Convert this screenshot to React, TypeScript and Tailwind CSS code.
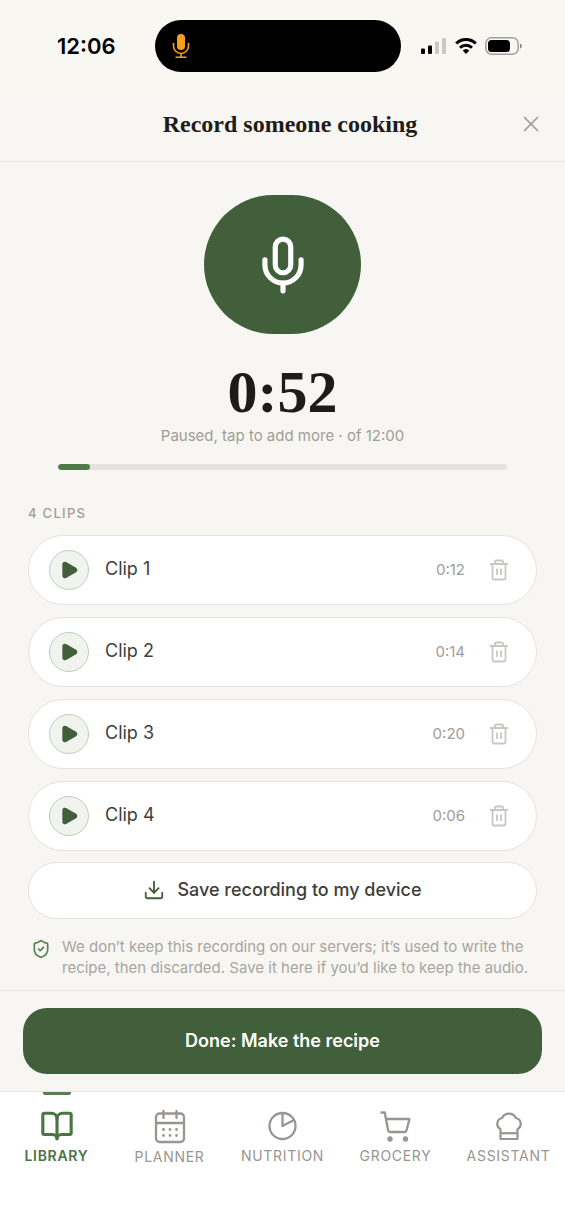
import { BookOpen, Download, Mic, Play, ShieldCheck, X } from 'lucide-react'
import type { ReactNode } from 'react'
import { clsx } from 'clsx'

interface Clip {
  name: string
  length: string
}

interface NavItem {
  label: string
  icon: ReactNode
  active?: boolean
}

const CLIPS: Clip[] = [
  { name: 'Clip 1', length: '0:12' },
  { name: 'Clip 2', length: '0:14' },
  { name: 'Clip 3', length: '0:20' },
  { name: 'Clip 4', length: '0:06' },
]

const RECORDED_SECONDS = 52
const MAX_SECONDS = 720

const NAV_ITEMS: NavItem[] = [
  { label: 'Library', icon: <BookOpen size={34} strokeWidth={2.2} />, active: true },
  { label: 'Planner', icon: <PlannerIcon /> },
  { label: 'Nutrition', icon: <NutritionIcon /> },
  { label: 'Grocery', icon: <GroceryIcon /> },
  { label: 'Assistant', icon: <ChefIcon /> },
]

function PlannerIcon() {
  return (
    <svg width="34" height="35" viewBox="0 0 34 35" fill="none" stroke="currentColor" strokeWidth="2.3" strokeLinecap="round" aria-hidden="true">
      <rect x="3" y="4.5" width="28" height="28.5" rx="3.5" />
      <path d="M3 14h28M10.5 2v7M23.5 2v7" />
      <path d="M10.5 20.5h.01M17 20.5h.01M23.5 20.5h.01M10.5 26.5h.01M17 26.5h.01M23.5 26.5h.01" strokeWidth="2.8" />
    </svg>
  )
}

function NutritionIcon() {
  return (
    <svg width="34" height="34" viewBox="0 0 34 34" fill="none" stroke="currentColor" strokeWidth="2.3" strokeLinejoin="round" aria-hidden="true">
      <circle cx="16.5" cy="17" r="13" />
      <path d="M16.5 4v13l11.5-6" />
    </svg>
  )
}

function GroceryIcon() {
  return (
    <svg width="34" height="34" viewBox="0 0 34 34" fill="none" stroke="currentColor" strokeWidth="2.3" strokeLinejoin="round" aria-hidden="true">
      <path d="M1.5 3.5h4.2l3.4 17.7a2.3 2.3 0 0 0 2.3 1.8h13.8a2.3 2.3 0 0 0 2.3-1.8L30.5 10H7" />
      <circle cx="11" cy="30" r="2.7" fill="currentColor" stroke="none" />
      <circle cx="26.5" cy="30" r="2.7" fill="currentColor" stroke="none" />
    </svg>
  )
}

function ChefIcon() {
  return (
    <svg width="34" height="34" viewBox="0 0 34 34" fill="none" stroke="currentColor" strokeWidth="2.2" strokeLinejoin="round" aria-hidden="true">
      <path d="M8.5 30V20.200a6 6 0 0 1 1.600-11.200 7.600 7.600 0 0 1 13.800 0 6 6 0 0 1 1.600 11.200V30z" />
      <path d="M8.5 24.200h17" />
    </svg>
  )
}

function TrashIcon() {
  return (
    <svg width="22" height="22" viewBox="0 0 22 22" fill="none" stroke="currentColor" strokeWidth="1.8" strokeLinejoin="round" aria-hidden="true">
      <path d="M2 5h18M7 5V3a1.500 1.500 0 0 1 1.500-1.500h5A1.500 1.500 0 0 1 15 3v2" />
      <path d="M4.500 5v14A1.500 1.500 0 0 0 6 20.500h10a1.500 1.500 0 0 0 1.500-1.500V5" />
      <path d="M9 9.500v6.500M13 9.500v6.500" />
    </svg>
  )
}

function StatusBar() {
  return (
    <div className="flex h-[88px] items-start bg-[#f8f7f2] pt-5 pr-2">
      <div className="flex h-[52px] flex-1 items-center justify-center pl-[18px] text-[22px] font-semibold text-black">12:06</div>
      <div className="flex h-[52px] w-[246px] items-center rounded-full bg-black pl-[17px]">
        <svg width="18" height="26" viewBox="0 0 18 26" fill="none" stroke="#f9a01b" strokeWidth="1.6" aria-hidden="true">
          <rect x="5" y="1" width="8" height="16" rx="4" fill="#f9a01b" stroke="none" />
          <path d="M1.500 10v3a7.500 7.500 0 0 0 15 0v-3M9 20.500V24M3.500 24.300h11" />
        </svg>
      </div>
      <div className="flex h-[52px] flex-1 items-center gap-2 pl-5">
        <svg width="26" height="18" viewBox="0 0 26 18" aria-hidden="true">
          <rect x="0" y="11.500" width="4" height="5.500" rx="1" />
          <rect x="7" y="8.500" width="4" height="8.500" rx="1" />
          <rect x="14" y="4.500" width="4" height="12.500" rx="1" fill="#c9c8c4" />
          <rect x="21" y="1" width="4" height="16" rx="1" fill="#c9c8c4" />
        </svg>
        <svg width="22" height="18" viewBox="0 0 22 18" fill="none" stroke="black" strokeWidth="3" aria-hidden="true">
          <path d="M1.200 6.500a14 14 0 0 1 19.600 0M5 10.700a8.600 8.600 0 0 1 12 0" />
          <path d="M11 17l-3.300-3.500a4.800 4.800 0 0 1 6.600 0z" fill="black" stroke="none" />
        </svg>
        <svg width="38" height="18" viewBox="0 0 38 18" aria-hidden="true">
          <rect x="0.800" y="0.800" width="32.400" height="16.400" rx="5.500" fill="none" stroke="#a2a19d" strokeWidth="1.5" />
          <rect x="3" y="3" width="22" height="12" rx="3.500" />
          <path d="M35 6.500q2 .8 2 2.500t-2 2.500z" fill="#8b8a87" />
        </svg>
      </div>
    </div>
  )
}

function ClipRow({ name, length }: Clip) {
  return (
    <li className="flex h-[70px] items-center rounded-full border border-[#e4e3e0] bg-white pr-[26px] pl-5">
      <button
        type="button"
        aria-label={`Play ${name}`}
        className="flex size-10 items-center justify-center rounded-full border border-[#bdd0b8] bg-[#f0f3ee] text-[#425f3b]"
      >
        <Play size={20} fill="currentColor" />
      </button>
      <span className="ml-4 flex-1 pb-0.5 text-lg text-[#403e3b]">{name}</span>
      <span className="text-[15px] text-[#a09d99]">{length}</span>
      <button type="button" aria-label={`Delete ${name}`} className="ml-[23px] text-[#c9c7c4]">
        <TrashIcon />
      </button>
    </li>
  )
}

export default function App() {
  return (
    <div className="flex min-h-screen flex-col bg-[#f7f6f2] font-['Inter',sans-serif]">
      <StatusBar />

      <header className="relative flex h-[74px] items-center justify-center border-b border-[#e8e7e4] pb-0.5 pl-[15px]">
        <h1 className="font-['Liberation_Serif',serif] text-2xl font-bold text-[#1e1c19]">Record someone cooking</h1>
        <button type="button" aria-label="Close" className="absolute right-[21px] text-[#a09d99]">
          <X size={26} strokeWidth={1.6} />
        </button>
      </header>

      <main className="px-7 pt-[33px] pb-3">
        {/* Recorder */}
        <section className="flex flex-col items-center">
          <button
            type="button"
            aria-label="Resume recording"
            className="flex h-[139px] w-[157px] items-center justify-center rounded-full bg-[#425f3b] text-white"
          >
            <Mic size={62} />
          </button>
          <p className="mt-7 font-['Liberation_Serif',serif] text-6xl leading-[60px] font-bold text-[#1e1c19]">0:52</p>
          <p className="mt-0.5 text-[15px] leading-6 text-[#a09d99]">Paused, tap to add more · of 12:00</p>
          <div className="mt-4 h-1.5 self-stretch px-[30px]">
            <div className="h-full overflow-hidden rounded-sm bg-[#e5e4e1]">
              <div
                className="h-full rounded-sm bg-[#4f7a48]"
                style={{ width: `${(RECORDED_SECONDS / MAX_SECONDS) * 100}%` }}
              />
            </div>
          </div>
        </section>

        {/* Clips */}
        <h2 className="mt-[33px] text-[13px] leading-5 font-medium tracking-widest text-[#a09d99] uppercase">{CLIPS.length} clips</h2>
        <ul className="mt-3 flex flex-col gap-3">
          {CLIPS.map((clip) => (
            <ClipRow key={clip.name} {...clip} />
          ))}
        </ul>

        <button
          type="button"
          className="mt-[11px] flex h-[57px] w-full items-center justify-center gap-3 rounded-full border border-[#e4e3e0] bg-white pb-0.5 text-lg font-medium text-[#403e3b]"
        >
          <Download size={22} className="text-[#425f3b]" />
          Save recording to my device
        </button>

        <div className="mt-[17px] flex gap-[11px] pl-[3px]">
          <ShieldCheck size={20} className="mt-[3px] shrink-0 text-[#55804e]" />
          <p className="text-[15px] leading-[21px] text-[#a8a5a1]">
            We don’t keep this recording on our servers; it’s used to write the recipe, then discarded. Save it here if you’d like to keep the audio.
          </p>
        </div>
      </main>

      <div className="border-t border-[#e8e7e4] px-[23px] py-[17px]">
        <button type="button" className="h-[66px] w-full rounded-3xl bg-[#425f3b] text-lg font-semibold text-white">
          Done: Make the recipe
        </button>
      </div>

      <nav className="grid flex-1 grid-cols-5 border-t border-[#e8e7e4] bg-white">
        {NAV_ITEMS.map((item) => (
          <a
            key={item.label}
            href="#"
            aria-current={item.active ? 'page' : undefined}
            className={clsx(
              'relative flex flex-col items-center pt-[17px] text-sm leading-5 tracking-wider uppercase',
              item.active ? 'font-semibold text-[#4a7442]' : 'text-[#9a958f]'
            )}
          >
            {item.active && <span className="absolute top-0 h-[3px] w-7 rounded-b-xs bg-[#55804e]" />}
            {item.icon}
            <span className="mt-[3px]">{item.label}</span>
          </a>
        ))}
      </nav>
    </div>
  )
}
